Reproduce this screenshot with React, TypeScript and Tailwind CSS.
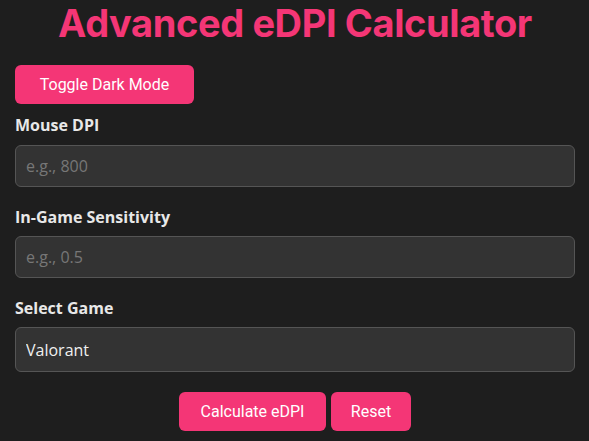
import { useState } from 'react';

const games = ['Valorant', 'CS2', 'Apex Legends', 'Overwatch 2', 'Fortnite'];

export default function App() {
  const [dpi, setDpi] = useState('');
  const [sens, setSens] = useState('');
  const [game, setGame] = useState('Valorant');

  const labelCls =
    'block text-[16px] leading-[20px] font-bold text-[#e8e8e8] [font-family:"Open_Sans","Noto_Sans",sans-serif]';
  const inputCls =
    'block w-full h-[42px] rounded-[6px] border border-[#555] bg-[#333] px-[10px] text-[16px] text-[#f0f0f0] placeholder:text-[#777] outline-none [font-family:"Open_Sans","Noto_Sans",sans-serif]';
  const btnCls =
    'h-[39px] whitespace-nowrap rounded-[6px] bg-[#f43676] px-0 text-[16px] text-white [font-family:Roboto,sans-serif]';

  return (
    <div className="min-h-screen bg-[#1e1e1e] pl-[15px] pr-[14px] pt-[1px]">
      <h1 className="text-center text-[38px] leading-[44px] font-bold tracking-[-0.4px] text-[#f43676] [font-family:Inter,sans-serif]">
        Advanced eDPI Calculator
      </h1>

      <button className={`${btnCls} mt-[20px] w-[179px]`}>Toggle Dark Mode</button>

      <div className="mt-[11px]">
        <label className={labelCls}>Mouse DPI</label>
        <input
          className={`${inputCls} mt-[10px]`}
          placeholder="e.g., 800"
          value={dpi}
          onChange={(e) => setDpi(e.target.value)}
        />
      </div>

      <div className="mt-[20px]">
        <label className={labelCls}>In-Game Sensitivity</label>
        <input
          className={`${inputCls} mt-[9px]`}
          placeholder="e.g., 0.5"
          value={sens}
          onChange={(e) => setSens(e.target.value)}
        />
      </div>

      <div className="mt-[20px]">
        <label className={labelCls}>Select Game</label>
        <select
          className={`${inputCls} mt-[9px] h-[45px] appearance-none`}
          value={game}
          onChange={(e) => setGame(e.target.value)}
        >
          {games.map((g) => (
            <option key={g}>{g}</option>
          ))}
        </select>
      </div>

      <div className="mt-[20px] flex justify-center gap-[5px]">
        <button className={`${btnCls} w-[147px]`}>Calculate eDPI</button>
        <button className={`${btnCls} w-[80px]`}>Reset</button>
      </div>
    </div>
  );
}
